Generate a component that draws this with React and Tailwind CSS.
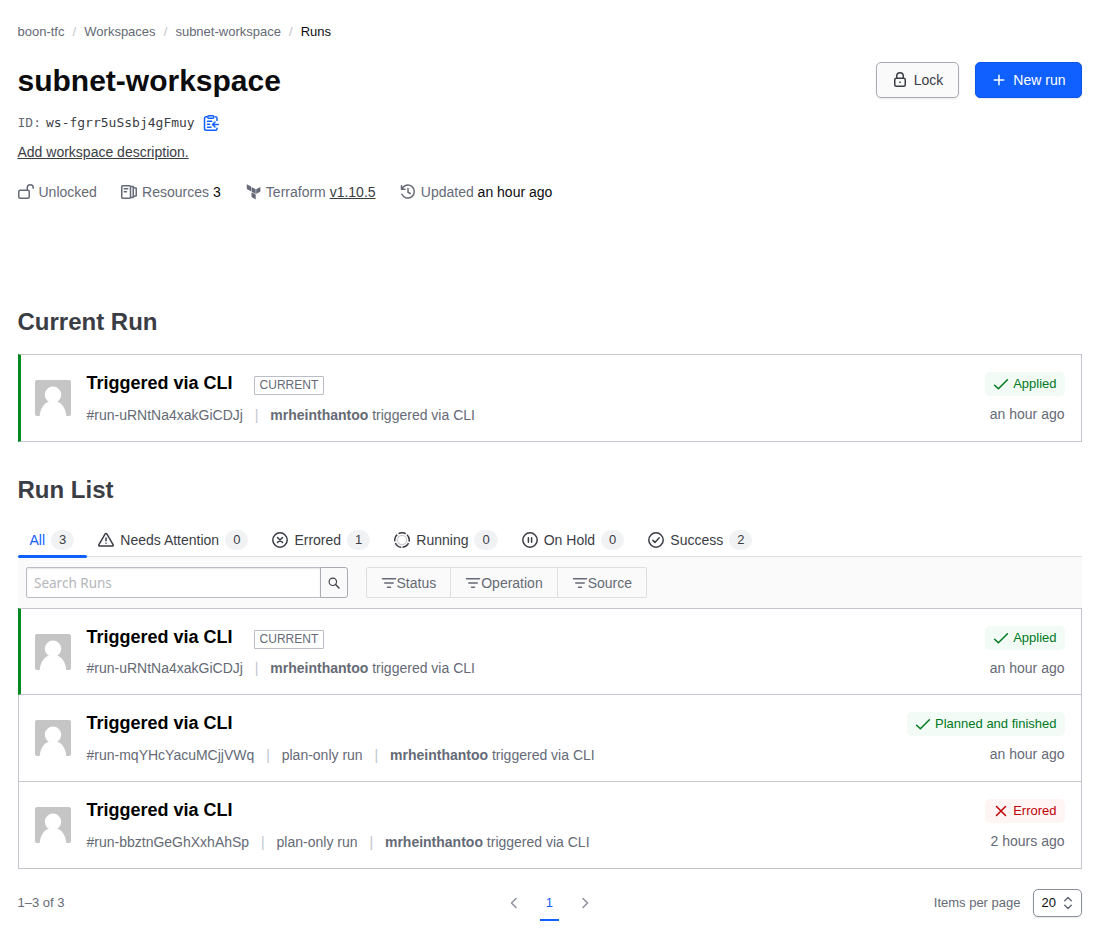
import React from "react";

function Icon({ children, className = "", size = 16 }) {
  return (
    <svg
      width={size}
      height={size}
      viewBox="0 0 16 16"
      fill="none"
      stroke="currentColor"
      strokeWidth="1.5"
      strokeLinecap="round"
      strokeLinejoin="round"
      className={`shrink-0 ${className}`}
    >
      {children}
    </svg>
  );
}

const LockIcon = () => (
  <Icon>
    <rect x="2.75" y="6.25" width="10.5" height="8" rx="1.5" />
    <path d="M4.75 6V4a3.25 3.25 0 0 1 6.5 0v2M8 10v.5" />
  </Icon>
);
const UnlockIcon = () => (
  <Icon>
    <rect x="0.75" y="6.25" width="10.5" height="8" rx="1.5" />
    <path d="M9.25 6V3.750a3 3 0 0 1 6 0v.5" />
  </Icon>
);
const ResourcesIcon = () => (
  <Icon>
    <rect x="0.75" y="1.75" width="8.75" height="12.5" rx="1" />
    <path d="M3.25 4.75h3.5M3.25 7.75h2.25M9.75 2.5h2.5v11h-2.5M12.5 3.5l2.75.75v7.5l-2.75.75" />
  </Icon>
);
const TerraformIcon = () => (
  <svg width="16" height="16" viewBox="-0.5 0 16 16" fill="currentColor" className="shrink-0">
    <path d="M1.3 .2l4.200 2.400v4.700L1.300 4.900zM6 2.900l4.200 2.400v4.700L6 7.600zM10.700 5.300l4.200-2.400v4.700l-4.200 2.400zM6 8.200l4.200 2.400v4.900L6 13.100z" />
  </svg>
);
const HistoryIcon = () => (
  <Icon>
    <path d="M1.5 1.750v3.500H5M1.850 5A6.500 6.500 0 1 1 1.900 10.300M8 4.500v3.750l2.250 1.250" />
  </Icon>
);
const CopyIcon = () => (
  <Icon>
    <path d="M3.75 1.75h-.5a1.750 1.750 0 0 0-1.750 1.750v10a1.750 1.750 0 0 0 1.750 1.750h9a1.750 1.750 0 0 0 1.750-1.750v-.25M12.25 1.75h.25a1.5 1.5 0 0 1 1.5 1.5V5.500" />
    <rect x="4.75" y="0.75" width="6" height="2.5" rx="1" />
    <path d="M4.5 6.250h4.250M4.500 9.250h2M4.500 12.250h3.500M15.250 9.500H9.750M12 7l-2.500 2.500 2.500 2.500" />
  </Icon>
);
const PlusIcon = () => (
  <Icon>
    <path d="M8 3.25v9.5M3.25 8h9.5" />
  </Icon>
);
const WarningIcon = () => (
  <Icon>
    <path d="M7.2 1.95L.9 12.6a.95.95 0 0 0 .8 1.45h12.6a.95.95 0 0 0 .8-1.45L8.8 1.95a.95.95 0 0 0-1.6 0zM8 6v2.75M8 11.25v.1" />
  </Icon>
);
const XCircleIcon = () => (
  <Icon>
    <circle cx="8" cy="8" r="7.2" />
    <path d="M5.5 5.5l5 5M10.5 5.5l-5 5" />
  </Icon>
);
const RunningIcon = () => (
  <Icon>
    <circle cx="8" cy="8" r="4.6" strokeWidth="1.2" className="opacity-25" />
    <circle
      cx="8"
      cy="8"
      r="7.25"
      strokeLinecap="butt"
      strokeDasharray="7.51 1.6"
      transform="rotate(96.3 8 8)"
    />
  </Icon>
);
const PauseIcon = () => (
  <Icon>
    <circle cx="8" cy="8" r="7.2" />
    <path d="M6.4 5.75v4.5M9.6 5.75v4.5" />
  </Icon>
);
const CheckCircleIcon = () => (
  <Icon>
    <circle cx="8" cy="8" r="7.2" />
    <path d="M4.9 8.4l2 2 4.3-4.6" />
  </Icon>
);
const CheckIcon = () => (
  <Icon>
    <path d="M1.6 9.2l3.8 3.6 9-9" />
  </Icon>
);
const XIcon = () => (
  <Icon>
    <path d="M3.5 3.5l9 9M12.5 3.5l-9 9" />
  </Icon>
);
const FilterIcon = () => (
  <Icon>
    <path d="M1.5 3.75h13M3.75 8h8.5M6.5 12.25h3" />
  </Icon>
);

function Crumbs() {
  return (
    <nav className="flex h-5 items-center gap-[8.1px] text-[13px] text-[#656a76]">
      <span>boon-tfc</span>
      <span className="text-[#c2c5cb]">/</span>
      <span>Workspaces</span>
      <span className="text-[#c2c5cb]">/</span>
      <span>subnet-workspace</span>
      <span className="text-[#c2c5cb]">/</span>
      <span className="text-[#0c0c0e]">Runs</span>
    </nav>
  );
}

function Avatar() {
  return (
    <svg width="36" height="36" viewBox="0 0 36 36" className="mt-[25px] shrink-0 rounded-[2px]">
      <rect width="36" height="36" fill="#c5c5c5" />
      <circle cx="18" cy="14.7" r="8.2" fill="#fff" />
      <path d="M4.7 36C5.2 29 9 23.4 13.5 21.5h9C27 23.4 30.800 29 31.3 36z" fill="#fff" />
    </svg>
  );
}

function Status({ kind, label }) {
  const error = kind === "error";
  return (
    <span
      className={`flex h-6 items-center gap-1 rounded-[5px] px-2 text-[13px] ${
        error ? "bg-[#fff5f5] text-[#c00005]" : "bg-[#f2fbf6] text-[#00781e]"
      }`}
    >
      {error ? <XIcon /> : <CheckIcon />}
      {label}
    </span>
  );
}

function Run({ id, planOnly, current, kind, status, time, className = "", subClass = "mt-3" }) {
  return (
    <article
      className={`flex border border-[#c2c5cb] bg-white pr-4 ${
        current ? "relative z-10 border-l-[3px] border-l-[#008a22] pl-[14px]" : "pl-4"
      } ${className}`}
    >
      <Avatar />
      <div className="ml-4 flex flex-1 flex-col pt-[18px]">
        <div className="flex h-5 items-center">
          <h3 className="text-[18px] leading-5 font-bold text-black">Triggered via CLI</h3>
          {current && (
            <span className="mt-[5px] ml-[21px] h-[19px] rounded-[1px] border border-[#babdc5] px-[5px] text-[12px] leading-4 text-[#656a76]">
              CURRENT
            </span>
          )}
        </div>
        <div className={`flex h-5 items-center gap-[11.9px] text-[14px] text-[#656a76] ${subClass}`}>
          <span>{id}</span>
          <span className="text-[#c2c5cb]">|</span>
          {planOnly && <span>plan-only run</span>}
          {planOnly && <span className="text-[#c2c5cb]">|</span>}
          <span>
            <b>mrheinthantoo</b> triggered via CLI
          </span>
        </div>
      </div>
      <div className="flex flex-col items-end pt-[17px]">
        <Status kind={kind} label={status} />
        <span className="mt-2 text-[14px] leading-5 text-[#656a76]">{time}</span>
      </div>
    </article>
  );
}

const tabs = [
  { label: "All", count: 3, active: true },
  { label: "Needs Attention", count: 0, icon: <WarningIcon /> },
  { label: "Errored", count: 1, icon: <XCircleIcon /> },
  { label: "Running", count: 0, icon: <RunningIcon /> },
  { label: "On Hold", count: 0, icon: <PauseIcon /> },
  { label: "Success", count: 2, icon: <CheckCircleIcon /> },
];

function Tabs() {
  return (
    <div className="flex h-[34px] border-b border-[#dedfe3] text-[14px] text-[#3b3d45]">
      {tabs.map((t) => (
        <div key={t.label} className={`relative flex h-[33px] items-center gap-1.5 px-3 ${t.active ? "text-[#1060ff]" : ""}`}>
          {t.icon}
          <span className="pt-px">{t.label}</span>
          <span className="flex h-5 items-center rounded-full bg-[#f1f2f3] px-2 text-[13px] text-[#3b3d45]">{t.count}</span>
          {t.active && <span className="absolute -right-px -bottom-[2px] left-0 h-[3px] rounded-full bg-[#1060ff]" />}
        </div>
      ))}
    </div>
  );
}

export default function App() {
  return (
    <main
      className="h-[931px] bg-white pt-[22px] pr-[15.5px] pl-[17.5px]"
      style={{ fontFamily: '"Liberation Sans", Arial, sans-serif' }}
    >
      <Crumbs />

      <header className="mt-5 flex justify-between">
        <h1 className="text-[30px] leading-[38px] font-bold text-[#0c0c0e]">subnet-workspace</h1>
        <div className="flex gap-4 text-[14px]">
          <button className="flex h-9 items-center gap-1.5 rounded-[5px] border border-[#a9abb2] bg-[#fafafa] px-[15px] text-[#3b3d45] shadow-[0_1px_2px_rgba(60,62,70,0.12)]">
            <LockIcon />
            Lock
          </button>
          <button className="flex h-9 items-center gap-1.5 rounded-[5px] border border-[#0c56e9] bg-[#1060ff] px-[15px] text-white shadow-[0_1px_2px_rgba(60,62,70,0.12)]">
            <PlusIcon />
            New run
          </button>
        </div>
      </header>

      <div
        className="mt-[13px] flex h-5 items-center text-[13px] text-[#656a76]"
        style={{ fontFamily: '"DejaVu Sans Mono", monospace' }}
      >
        <span>ID:</span>
        <span className="ml-[5px] text-[#3b3d45]">ws-fgrr5uSsbj4gFmuy</span>
        <span className="ml-[8px] text-[#1060ff]">
          <CopyIcon />
        </span>
      </div>

      <div className="mt-[9px] text-[14px] leading-5 text-[#3b3d45] underline">Add workspace description.</div>

      <div className="mt-5 flex h-5 items-center gap-[24.2px] text-[14px] text-[#656a76]">
        <span className="flex items-center gap-[5px]">
          <UnlockIcon />
          Unlocked
        </span>
        <span className="flex items-center gap-[5px]">
          <ResourcesIcon />
          <span>
            Resources <span className="text-[#0c0c0e]">3</span>
          </span>
        </span>
        <span className="flex items-center gap-[5px]">
          <TerraformIcon />
          <span>
            Terraform <span className="text-[#3b3d45] underline">v1.10.5</span>
          </span>
        </span>
        <span className="flex items-center gap-[5px]">
          <HistoryIcon />
          <span>
            Updated <span className="text-[#0c0c0e]">an hour ago</span>
          </span>
        </span>
      </div>

      <section className="mt-[105px]">
        <h2 className="text-[24px] leading-[30px] font-bold text-[#3b3d45]">Current Run</h2>
        <Run
          className="mt-[17px] h-[88px]"
          current
          id="#run-uRNtNa4xakGiCDJj"
          status="Applied"
          time="an hour ago"
        />
      </section>

      <section className="mt-[33px]">
        <h2 className="text-[24px] leading-[30px] font-bold text-[#3b3d45]">Run List</h2>
        <div className="mt-[18px]">
          <Tabs />
        </div>
        <div className="flex h-[51px] bg-[#fafafa] pt-[10px] pl-2">
          <div
            className="h-[31px] w-[295px] rounded-l-[2px] border border-[#babdc5] bg-white px-[7.500px] text-[13.500px] leading-[30px] text-[#b4b6ba] shadow-[inset_0_1px_2px_rgba(0,0,0,0.1)]"
            style={{ fontFamily: '"Noto Sans", sans-serif' }}
          >
            Search Runs
          </div>
          <button className="-ml-px flex h-[31px] w-7 items-center justify-center rounded-r-[3px] border border-[#a9abb2] bg-[#fafafa] text-[#3b3d45]">
            <svg width="12" height="12" viewBox="0 0 12 12" fill="none" stroke="currentColor" strokeWidth="1.1" strokeLinecap="round">
              <circle cx="4.8" cy="4.8" r="3.7" />
              <path d="M7.6 7.600L11 11" strokeWidth="1.4" />
            </svg>
          </button>
          <div className="ml-[18px] flex h-[31px] rounded-[2px] border border-[#dedfe3] text-[14px] text-[#656a76]">
            {["Status", "Operation", "Source"].map((f, i) => (
              <span key={f} className={`flex items-center pr-[14px] pl-[14px] ${i ? "border-l border-[#dedfe3]" : ""}`}>
                <FilterIcon />
                <span className="pt-px">{f}</span>
              </span>
            ))}
          </div>
        </div>
        <Run
          className="h-[87px]"
          subClass="mt-[11px]"
          current
          id="#run-uRNtNa4xakGiCDJj"
          status="Applied"
          time="an hour ago"
        />
        <Run className="-mt-px h-[88px]" planOnly id="#run-mqYHcYacuMCjjVWq" status="Planned and finished" time="an hour ago" />
        <Run
          className="-mt-px h-[88px]"
          planOnly
          id="#run-bbztnGeGhXxhAhSp"
          kind="error"
          status="Errored"
          time="2 hours ago"
        />
      </section>

      <footer className="mt-4 grid h-7 grid-cols-3 items-center text-[13px] text-[#656a76]">
        <span>1–3 of 3</span>
        <div className="flex items-center justify-center">
          <Icon size={16} className="text-[#8c909c]">
            <path d="M10 3.500L5.500 8l4.500 4.500" />
          </Icon>
          <span className="relative mx-[18px] flex h-9 w-[19px] items-center justify-center text-[#1060ff]">
            1
            <span className="absolute inset-x-0 bottom-0 h-[2px] bg-[#1060ff]" />
          </span>
          <Icon size={16} className="text-[#8c909c]">
            <path d="M6 3.500L10.500 8 6 12.500" />
          </Icon>
        </div>
        <div className="-mr-[0.5px] flex items-center justify-end gap-[12.5px]">
          <span>Items per page</span>
          <span className="flex h-7 w-[49px] items-center justify-between rounded-[5px] border border-[#8c909c] bg-white pr-[5px] pl-[7.5px] text-[#0c0c0e] shadow-[0_1px_2px_rgba(60,62,70,0.12)]">
            20
            <Icon className="text-[#656a76]">
              <path d="M4.750 5.750L8 2.500l3.250 3.250M4.750 10.250L8 13.500l3.250-3.250" />
            </Icon>
          </span>
        </div>
      </footer>
    </main>
  );
}
